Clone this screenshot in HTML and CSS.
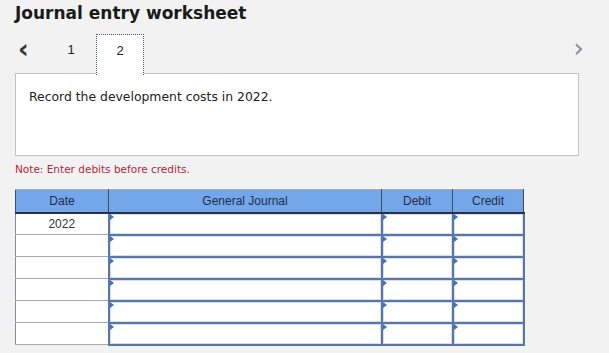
FILE: index.html
```html
<!DOCTYPE html>
<html lang="en">

<head>
    <meta charset="UTF-8">
    <meta name="viewport" content="width=device-width, initial-scale=1.0">
    <title>Journal entry worksheet</title>
    <link rel="stylesheet" href="styles.css">
</head>

<body>
    <div id="page">
        <h1 class="title">Journal entry worksheet</h1>

        <div class="nav">
            <span class="arrow prev">&lsaquo;</span>
            <ul class="tabs">
                <li>1</li>
                <li class="active">2</li>
            </ul>
            <span class="arrow next">&rsaquo;</span>
        </div>

        <div class="task">Record the development costs in 2022.</div>

        <p class="note">Note: Enter debits before credits.</p>

        <table class="journal">
            <thead>
                <tr>
                    <th class="c-date">Date</th>
                    <th class="c-acct">General Journal</th>
                    <th class="c-num">Debit</th>
                    <th class="c-num">Credit</th>
                </tr>
            </thead>
            <tbody>
                <tr>
                    <td class="date">2022</td>
                    <td class="field"></td>
                    <td class="field"></td>
                    <td class="field"></td>
                </tr>
                <tr>
                    <td class="date"></td>
                    <td class="field"></td>
                    <td class="field"></td>
                    <td class="field"></td>
                </tr>
                <tr>
                    <td class="date"></td>
                    <td class="field"></td>
                    <td class="field"></td>
                    <td class="field"></td>
                </tr>
                <tr>
                    <td class="date"></td>
                    <td class="field"></td>
                    <td class="field"></td>
                    <td class="field"></td>
                </tr>
                <tr>
                    <td class="date"></td>
                    <td class="field"></td>
                    <td class="field"></td>
                    <td class="field"></td>
                </tr>
                <tr>
                    <td class="date"></td>
                    <td class="field"></td>
                    <td class="field"></td>
                    <td class="field"></td>
                </tr>
            </tbody>
        </table>
    </div>
</body>

</html>
```

FILE: styles.css
```css
* {
    margin: 0;
    padding: 0;
    box-sizing: border-box;
}

li {
    list-style: none;
}

body {
    background-color: #f2f2f2;
    font-family: "DejaVu Sans", Verdana, sans-serif;
    color: #222;
}

#page {
    width: 609px;
    height: 353px;
    padding: 3px 30px 0 15px;
    overflow: hidden;
}

.title {
    font-size: 17px;
    font-weight: bold;
    color: #1a1a1a;
    height: 31px;
    line-height: 20px;
}

.nav {
    display: flex;
    align-items: flex-end;
    height: 41px;
    position: relative;
    z-index: 1;
}

.arrow {
    font-size: 26px;
    line-height: 26px;
    color: #333;
}

.prev {
    width: 43px;
    padding-left: 3px;
    margin-bottom: 13px;
    font-weight: bold;
}

.next {
    margin-left: auto;
    margin-right: -5px;
    color: #8a8a96;
    margin-bottom: 14px;
}

.tabs {
    display: flex;
}

.tabs li {
    width: 26px;
    height: 41px;
    padding-top: 8px;
    margin-right: 12px;
    text-align: center;
    font-family: "Liberation Sans", Arial, sans-serif;
    font-size: 13px;
    color: #222;
}

.tabs li.active {
    width: 48px;
    margin-right: 0;
    background-color: #fff;
    border: 1px dotted #44557a;
    border-bottom: none;
}

.task {
    margin-top: -2px;
    height: 83px;
    background-color: #fff;
    border: 1px solid #c2c2c8;
    padding: 15px 13px;
    font-size: 12.4px;
    color: #222;
}

.note {
    margin-top: 7px;
    font-size: 10.5px;
    color: #b0283c;
    height: 26px;
}

.journal {
    border-collapse: collapse;
    table-layout: fixed;
    width: 508px;
    font-family: "Liberation Sans", Arial, sans-serif;
    font-size: 12px;
}

.journal th {
    height: 23px;
    background-color: #74a6ea;
    color: #1e2d4d;
    font-weight: normal;
    border: 1px solid #3d4c66;
    border-top-color: #a6aebc;
    border-bottom: 2px solid #2c3142;
}

.c-date {
    width: 93px;
}

.c-acct {
    width: 273px;
}

.c-num {
    width: 71px;
}

.journal td {
    height: 22px;
}

.journal td.date {
    background-color: #fff;
    text-align: center;
    color: #333;
    border-left: 1px solid #8a8a96;
    border-bottom: 1px solid #a8a8b0;
}

.journal td.field {
    position: relative;
    background-color: #fff;
    border: 2px solid #5a77a3;
    box-shadow: inset 0 0 0 1px #d4deec;
}

.journal td.field::before {
    content: "";
    position: absolute;
    left: 0;
    top: 0;
    border-left: 4px solid #3f72c4;
    border-top: 3px solid transparent;
    border-bottom: 3px solid transparent;
}
```
